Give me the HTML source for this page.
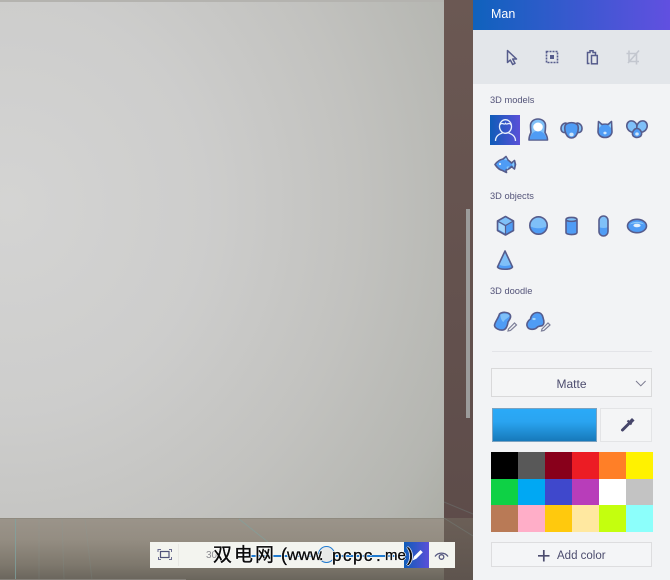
<!DOCTYPE html>
<html><head><meta charset="utf-8">
<style>
html,body{margin:0;padding:0;width:670px;height:580px;overflow:hidden;background:#777}
body{position:relative;font-family:"Liberation Sans","Noto Sans CJK SC",sans-serif}
.a{position:absolute}
.lbl{position:absolute;left:490px;font-size:9.3px;line-height:12px;color:#55557a;white-space:nowrap}
svg{position:absolute;overflow:visible}
.s{stroke:#565c8c;stroke-width:1.6;stroke-linejoin:round;stroke-linecap:round}
.c i{display:block;float:left;width:27px;height:26.67px}
.w{position:absolute;color:#0a0a0a;white-space:nowrap;line-height:22px;top:545px;-webkit-text-stroke:.35px #0a0a0a;text-shadow:1px 0 0 rgba(255,255,255,.9),-1px 0 0 rgba(255,255,255,.9),0 1px 0 rgba(255,255,255,.9),0 -1px 0 rgba(255,255,255,.9)}
</style></head>
<body>
<!-- backdrop -->
<div class="a" style="left:0;top:0;width:473px;height:580px;background:linear-gradient(180deg,#6b5853,#5c4b49)"></div>
<div class="a" style="left:0;top:518px;width:444px;height:62px;background:linear-gradient(180deg,#9b948a 0%,#948d82 35%,#7e786d 75%,#6a655c 100%)"></div>
<div class="a" style="left:444px;top:518px;width:29px;height:62px;background:linear-gradient(180deg,#6b5f57,#5e544e)"></div>
<!-- canvas -->
<div class="a" style="left:0;top:0;width:444px;height:517.500px;background:radial-gradient(ellipse 560px 590px at 10px 205px,#d4d4d3 0%,#cdcdcc 35%,#c2c2bf 62%,#b5b6b1 85%,#a6a89f 100%);border-bottom:1.500px solid #8f8a7f"></div>
<div class="a" style="left:0;top:0;width:444px;height:2px;background:#b4b3af"></div>
<svg width="473" height="90" style="left:0;top:490px" fill="none" stroke="#7fa3a0" stroke-width="1">
<path d="M15.500 29V90" opacity=".75"/>
<path d="M39 29V90M62 29L64 90M85 29L92 90" opacity=".15"/>
<path d="M239 29L268 52" opacity=".6"/>
<path d="M444 28L473 46M444 12L473 24" opacity=".25"/>
</svg>
<div class="a" style="left:0;top:578.500px;width:186px;height:1.500px;background:#85817a"></div>
<!-- scrollbar -->
<div class="a" style="left:466px;top:209px;width:3.500px;height:209px;background:#9c9c9b"></div>

<!-- panel -->
<div class="a" style="left:473px;top:0;width:197px;height:580px;background:#f2f3f5"></div>
<div class="a" style="left:473px;top:0;width:197px;height:30px;background:linear-gradient(90deg,#0f62bd,#6150e0)"></div>
<div class="a" style="left:491px;top:6.500px;font-size:12.500px;line-height:15px;color:#fff">Man</div>
<div class="a" style="left:473px;top:30px;width:197px;height:54px;background:#e3e6ea"></div>

<svg width="197" height="54" style="left:473px;top:30px" fill="none">
<path d="M34.500 20.500L34.500 32.500L37.300 30L39.700 34.500L42 33.300L39.700 29L43.500 29Z" stroke="#565c8c" stroke-width="1.500" stroke-linejoin="round"/>
<rect x="73.500" y="21.500" width="11" height="11" stroke="#565c8c" stroke-width="1.600" stroke-dasharray="2 1"/>
<rect x="77" y="25" width="4" height="4" fill="#565c8c"/>
<path d="M116.500 33.500H114.500V22.500H117V20.800H120V22.500H122.500V25" stroke="#565c8c" stroke-width="1.500"/>
<rect x="118.500" y="25.500" width="5.800" height="8.300" stroke="#565c8c" stroke-width="1.500"/>
<path d="M156 20.500V31.500H166M153.500 23.500H163.500V34.500M155 33L166 20.500" stroke="#c3c7cf" stroke-width="1.600"/>
</svg>

<div class="lbl" style="top:94px">3D models</div>
<div class="a" style="left:490px;top:115px;width:30px;height:30px;background:linear-gradient(90deg,#0f5cb8,#5a50d8)"></div>
<svg width="30" height="30" style="left:490px;top:115px" fill="none" stroke="#e8f0fc" stroke-width="1.300"><ellipse cx="15.500" cy="11.500" rx="6" ry="6.800"/><path d="M9.800 10C12 6.500 14.500 10.500 15.500 8.500C16.500 10.500 19 6.500 21.200 10M5.500 26C5.500 21 9 19 12.500 18M25.500 26C25.500 21 22 19 18.500 18"/></svg>

<!-- woman -->
<svg width="24" height="26" style="left:527px;top:117px">
<path class="s" d="M2 23C2 19 3.500 16.500 4 15.500C3.500 12 3.500 10 3.500 8.500C3.500 4.500 7 2 11 2C15 2 18.500 4.500 18.500 8.500C18.500 10 18.500 12 18 15.500C18.500 16.500 20.500 19 20.500 23Z" fill="#7fc0f8"/>
<path d="M2.800 22.500C3 17.500 6.500 14 11 14C15.500 14 19 17.500 19.700 22.500Z" fill="#4f9cf5"/>
<ellipse cx="11" cy="10" rx="4.800" ry="4.500" fill="#fff"/>
</svg>
<!-- dog -->
<svg width="24" height="24" style="left:560px;top:120px">
<path class="s" d="M6 3C3 3 1 5.500 1 8.500C1 11.500 3 13 5.500 12.500L7 10Z" fill="#7fc0f8"/>
<path class="s" d="M17 3C20 3 22 5.500 22 8.500C22 11.500 20 13 17.500 12.500L16 10Z" fill="#7fc0f8"/>
<path class="s" d="M5 6C6 1.500 17 1.500 18 6C19 11 16.500 18 11.500 18C6.500 18 4 11 5 6Z" fill="#4f9cf5"/>
<ellipse cx="11.500" cy="14.500" rx="2.200" ry="1.900" fill="#cfe6fb"/>
</svg>
<!-- cat -->
<svg width="18" height="20" style="left:595.500px;top:120px">
<path class="s" d="M2.500 1.500L6 4.500C7.500 4 10.500 4 12 4.500L15.500 1.500L16 12C15.500 15.500 12.500 17.500 9 17.500C5.500 17.500 2.500 15.500 2 12Z" fill="#4f9cf5"/>
<path d="M3 3L5.500 5.500L3 8ZM15 3L12.500 5.500L15 8Z" fill="#8ccaf9"/>
<ellipse cx="9" cy="13" rx="1.600" ry="1.400" fill="#cfe6fb"/>
</svg>
<!-- bunny -->
<svg width="24" height="22" style="left:626px;top:120px">
<ellipse class="s" cx="6" cy="6.500" rx="5" ry="5.800" fill="#7fc0f8" transform="rotate(-30 6 6.500)"/>
<ellipse class="s" cx="16" cy="6.500" rx="5" ry="5.800" fill="#7fc0f8" transform="rotate(30 16 6.500)"/>
<path class="s" d="M11 8.500C14 8.500 16 12 15.500 14.500C15 16.500 13 17.500 11 17.500C9 17.500 7 16.500 6.500 14.500C6 12 8 8.500 11 8.500Z" fill="#4f9cf5"/>
<ellipse cx="11" cy="14" rx="1.800" ry="1.600" fill="#cfe6fb"/>
</svg>
<!-- fish -->
<svg width="24" height="20" style="left:494px;top:155px">
<path class="s" d="M1 9.500C3.500 6 6.500 4.500 9 4L12 1.500L14 5C15.500 6 16.500 7 17.500 8L20.500 5.500L21.500 9.500L20.500 14L17.500 11.500C16 13.500 14 14.500 12 15L12.500 17.500L8.500 15.500C5.500 15 3 12.500 1 9.500Z" fill="#4f9cf5"/>
<path d="M20 6.500L18 9.500L20 13ZM12.500 12L15 11L13.500 14.500ZM10 5L12 2.500L13.300 5.300Z" fill="#8ccaf9"/>
<circle cx="6" cy="9" r="1.100" fill="#dbeafb"/>
</svg>

<div class="lbl" style="top:190px">3D objects</div>
<!-- cube -->
<svg width="20" height="22" style="left:496px;top:215px">
<path class="s" d="M9.500 1.500L17.500 6V15.500L9.500 20L1.500 15.500V6Z" fill="#4f9cf5"/>
<path d="M9.500 2.500L16.500 6.500L9.500 10.500L2.500 6.500Z" fill="#7fc0f8"/>
<path d="M2.500 7.500L9.500 11.500V18.500L2.500 14.500Z" fill="#a5d6fb"/>
<path d="M9.500 11V20M1.500 6L9.500 10.500L17.500 6" stroke="#565c8c" fill="none" stroke-width="1.200"/>
</svg>
<!-- sphere -->
<svg width="20" height="20" style="left:529px;top:216px">
<circle cx="9.500" cy="9.500" r="8.700" fill="#7fc0f8"/>
<path d="M1 10C5 13 14 13 18 10C17.500 15 14 18.200 9.500 18.200C5 18.200 1.500 15 1 10Z" fill="#4f9cf5"/>
<circle class="s" cx="9.500" cy="9.500" r="8.700" fill="none"/>
</svg>
<!-- cylinder -->
<svg width="14" height="20" style="left:565px;top:215.500px">
<path d="M1 3.500V16.500C1 19 12 19 12 16.500V3.500Z" fill="#4f9cf5"/>
<ellipse cx="6.500" cy="3.500" rx="5.500" ry="2.500" fill="#7fc0f8"/>
<path class="s" d="M1 3.500C1 .8 12 .8 12 3.500V16.500C12 19.200 1 19.200 1 16.500ZM1 3.500C1 6 12 6 12 3.500" fill="none"/>
</svg>
<!-- capsule -->
<svg width="12" height="22" style="left:598px;top:215px">
<rect x="1" y="1" width="9" height="20" rx="4.500" fill="#7fc0f8"/>
<path d="M1 12C3 13.300 8 13.300 10 12V16.500C10 22.500 1 22.500 1 16.500Z" fill="#4f9cf5"/>
<rect class="s" x="1" y="1" width="9" height="20" rx="4.500" fill="none"/>
</svg>
<!-- torus -->
<svg width="22" height="16" style="left:626px;top:218px">
<ellipse class="s" cx="11" cy="8" rx="9.500" ry="6.700" fill="#4f9cf5"/>
<path d="M4 6.500C6 3 16 3 18 6.500C15 4.800 7 4.800 4 6.500Z" fill="#8ccaf9"/>
<ellipse cx="11" cy="7.500" rx="3.600" ry="1.800" fill="#e4f1fc"/>
</svg>
<!-- cone -->
<svg width="20" height="22" style="left:496px;top:250px">
<path d="M9 1L1.500 17C3 20 15 20 16.500 17Z" fill="#7fc0f8"/>
<path d="M3 14.500C6 16.500 12 16.500 15 14.500L16.500 17C15 20 3 20 1.500 17Z" fill="#4f9cf5"/>
<path class="s" d="M9 1L1.500 17C3 20 15 20 16.500 17Z" fill="none"/>
</svg>

<div class="lbl" style="top:285px">3D doodle</div>
<svg width="26" height="24" style="left:493px;top:311px">
<path class="s" d="M6.500 3C9.500 .5 15 1 17 3.500C18.800 6.500 16 9 15 11C14.500 14.500 13 18.500 10 19C6.500 19.500 2 17.500 1.500 14.500C1.500 11.500 5 8 6.500 3Z" fill="#4f9cf5"/>
<path d="M7.500 3.500C10.500 2 15 2.500 16.500 4.500C15.500 7.500 12 7.500 10.500 11C9 10.500 7 6.500 7.500 3.500Z" fill="#7fc0f8"/>
<path d="M15.500 18L21.500 12L23.500 14L17.500 19.500L15 20Z" fill="#f2f3f5" stroke="#7c7e98" stroke-width="1.200"/>
</svg>
<svg width="26" height="24" style="left:525px;top:311px">
<path class="s" d="M5.500 8C6 4 9 1.500 12.500 1.500C16 1.500 17.500 4 18 6.500C19 9.500 19.500 13 17.500 14.500C15.500 15.500 13.500 14.500 12 16.500C9.500 19 4 19 2.500 16C.8 13 3 9.500 5.500 8Z" fill="#4f9cf5"/>
<ellipse cx="9" cy="8" rx="1.700" ry="1.100" fill="#a5d6fb"/>
<path d="M17 18L23 12L25 14L19 19.500L16.500 20Z" fill="#f2f3f5" stroke="#7c7e98" stroke-width="1.200"/>
</svg>

<div class="a" style="left:492px;top:351px;width:160px;height:1px;background:#e3e4e8"></div>

<!-- dropdown -->
<div class="a" style="left:491px;top:368px;width:159px;height:27px;border:1.500px solid #d9d9da;background:#f4f5f6;text-align:center;font-size:12px;line-height:30px;color:#4c4c6e">Matte</div>
<svg width="12" height="8" style="left:634.500px;top:380px" fill="none"><path d="M1 1L5.800 5.800L10.600 1" stroke="#7b7b90" stroke-width="1"/></svg>

<!-- colour -->
<div class="a" style="left:493px;top:409px;width:103px;height:31.500px;background:linear-gradient(180deg,#2aaaf8 0%,#2aa4f0 40%,#1779ba 100%);outline:1px solid #7ba2c0"></div>
<div class="a" style="left:600px;top:408px;width:49.500px;height:32px;border:1px solid #e3e4e6;background:#f4f5f6"></div>
<svg width="16" height="16" style="left:620px;top:417px" fill="none"><path d="M2.500 13L9 6.500" stroke="#46466a" stroke-width="3" stroke-linecap="round"/><path d="M7.500 3.500L11.500 7.500" stroke="#46466a" stroke-width="2"/><path d="M9 5L12 2L13.500 3.500L10.500 6.500Z" fill="#46466a" stroke="#46466a" stroke-width="1.500"/></svg>

<!-- swatches -->
<div class="a c" style="left:491px;top:452px;width:162px;height:80px">
<i style="background:#000"></i><i style="background:#585858"></i><i style="background:#88001b"></i><i style="background:#ec1c24"></i><i style="background:#ff7f27"></i><i style="background:#fff200"></i>
<i style="background:#0ed145"></i><i style="background:#00a8f3"></i><i style="background:#3f48cc"></i><i style="background:#b83dba"></i><i style="background:#fff"></i><i style="background:#c3c3c3"></i>
<i style="background:#b97a56"></i><i style="background:#ffaec8"></i><i style="background:#ffc90d"></i><i style="background:#ffe8a0"></i><i style="background:#c4ff0e"></i><i style="background:#8cfffb"></i>
</div>

<!-- add colour -->
<div class="a" style="left:491px;top:542px;width:159px;height:23px;border:1.500px solid #dddddf;background:#f4f5f7"></div>
<svg width="12" height="12" style="left:538px;top:550px" fill="none"><path d="M5.800 0V11.500M0 5.800H11.500" stroke="#4c4c6e" stroke-width="1.700"/></svg>
<div class="a" style="left:557px;top:548.500px;font-size:11.500px;line-height:15px;color:#4c4c6e;white-space:nowrap">Add color</div>

<!-- bottom toolbar -->
<div class="a" style="left:150px;top:542px;width:305px;height:26px;background:#f3f4ef"></div>
<svg width="14" height="12" style="left:158px;top:549px" fill="none"><path d="M0 3V.500H3M11 .500H13.500V3M13.500 8V10.500H11M3 10.500H.500V8" stroke="#6a6c90" stroke-width="1"/><rect x="2.500" y="2.500" width="8.500" height="6" stroke="#50527a" stroke-width="1.200"/></svg>
<div class="a" style="left:178px;top:544px;width:1px;height:22px;background:#e8e8e4"></div>
<div class="a" style="left:206px;top:549px;font-size:10px;line-height:13px;color:#8c8c92">30</div>
<div class="a" style="left:246px;top:554.500px;width:158px;height:2px;background:#1f7ad0"></div>
<div class="a" style="left:318px;top:546px;width:15px;height:15px;border:1.500px solid #1f7ad0;border-radius:50%;background:#e8e9e8"></div>
<div class="a" style="left:404px;top:542px;width:25px;height:26px;background:linear-gradient(90deg,#0f5cb8,#5a50d8)"></div>
<svg width="14" height="14" style="left:411px;top:548px"><path d="M1.500 12.500L3 8.500L9.500 2L11.800 4.300L5.300 10.800Z" fill="#fff"/></svg>
<svg width="16" height="10" style="left:434px;top:551px" fill="none"><path d="M1 5.500C4 1 11 1 14 5.500" stroke="#55577f" stroke-width="1.300"/><circle cx="7.500" cy="6" r="2.300" stroke="#55577f" stroke-width="1.300"/></svg>

<!-- watermark -->
<div class="w" style="left:213px;font-size:19px;letter-spacing:2px">双电网</div>
<div class="w" style="left:281px;font-size:18px;top:544px">(</div>
<div class="w" style="left:287px;font-size:16px;letter-spacing:0">www</div>
<div class="w" style="left:319px;font-size:16px">.</div>
<div class="w" style="left:332px;font-size:17px;letter-spacing:1.500px">pcpc</div>
<div class="w" style="left:376px;font-size:17px">.</div>
<div class="w" style="left:385px;font-size:15px">me</div>
<div class="w" style="left:407px;font-size:18px;top:544px">)</div>
</body></html>
